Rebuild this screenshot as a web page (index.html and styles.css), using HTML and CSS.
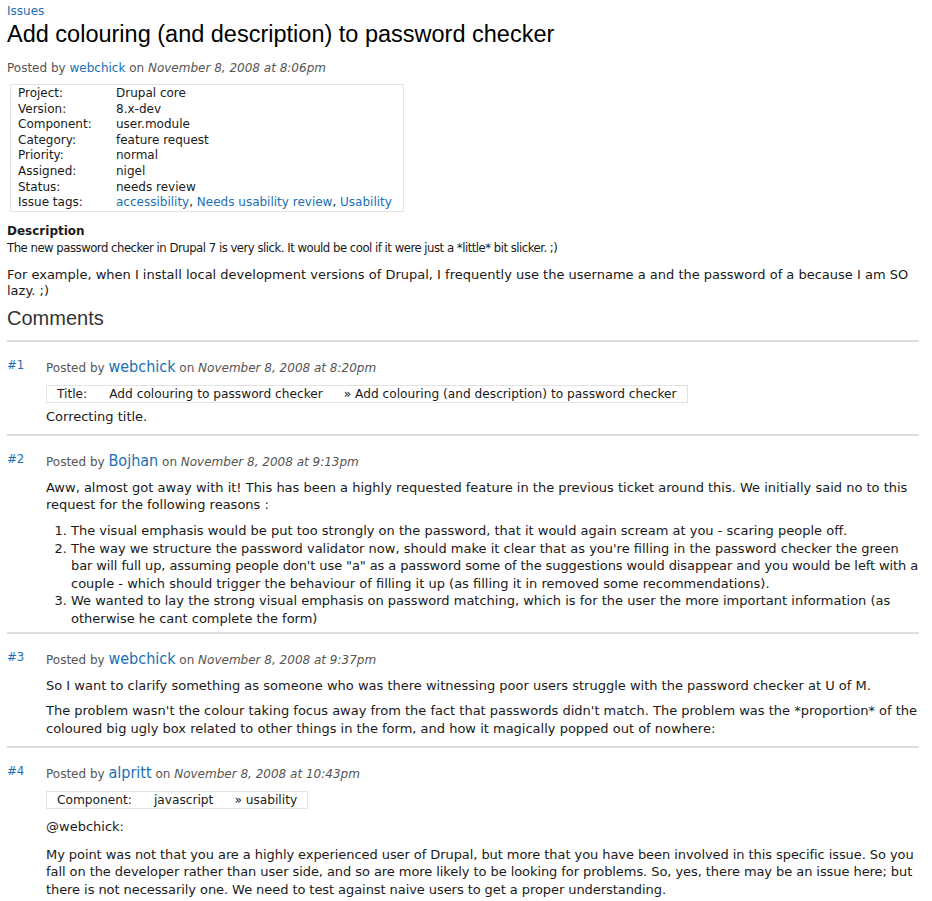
FILE: index.html
```html
<!DOCTYPE html>
<html>
<head>
<meta charset="utf-8">
<link rel="stylesheet" href="styles.css">
</head>
<body>
<div class="page">
  <div class="breadcrumb"><a href="#">Issues</a></div>
  <h1 class="title">Add colouring (and description) to password checker</h1>
  <div class="submitted">Posted by <a href="#">webchick</a> on <em>November 8, 2008 at 8:06pm</em></div>
  <table class="meta">
    <tr><td class="lbl">Project:</td><td>Drupal core</td></tr>
    <tr><td class="lbl">Version:</td><td>8.x-dev</td></tr>
    <tr><td class="lbl">Component:</td><td>user.module</td></tr>
    <tr><td class="lbl">Category:</td><td>feature request</td></tr>
    <tr><td class="lbl">Priority:</td><td>normal</td></tr>
    <tr><td class="lbl">Assigned:</td><td>nigel</td></tr>
    <tr><td class="lbl">Status:</td><td>needs review</td></tr>
    <tr><td class="lbl">Issue tags:</td><td><a href="#">accessibility</a>, <a href="#">Needs usability review</a>, <a href="#">Usability</a></td></tr>
  </table>
  <div class="description">
    <h3>Description</h3>
    <p class="first">The new password checker in Drupal 7 is very slick. It would be cool if it were just a *little* bit slicker. ;)</p>
    <p>For example, when I install local development versions of Drupal, I frequently use the username a and the password of a because I am SO lazy. ;)</p>
  </div>
  <h2 class="comments-title">Comments</h2>

  <div class="comment">
    <a class="num" href="#">#1</a>
    <div class="cbody">
      <div class="csub">Posted by <a class="author" href="#">webchick</a> on <em>November 8, 2008 at 8:20pm</em></div>
      <table class="changes"><tr><td class="clbl">Title:</td><td class="cold">Add colouring to password checker</td><td class="cnew">» Add colouring (and description) to password checker</td></tr></table>
      <p>Correcting title.</p>
    </div>
  </div>

  <div class="comment">
    <a class="num" href="#">#2</a>
    <div class="cbody">
      <div class="csub">Posted by <a class="author" href="#">Bojhan</a> on <em>November 8, 2008 at 9:13pm</em></div>
      <p class="gap">Aww, almost got away with it! This has been a highly requested feature in the previous ticket around this. We initially said no to this request for the following reasons :</p>
      <ol>
        <li>The visual emphasis would be put too strongly on the password, that it would again scream at you - scaring people off.</li>
        <li>The way we structure the password validator now, should make it clear that as you're filling in the password checker the green <span class="tight">bar will full up, assuming people don't use "a" as a password some of the suggestions would disappear and you would be left with a</span> couple - which should trigger the behaviour of filling it up (as filling it in removed some recommendations).</li>
        <li>We wanted to lay the strong visual emphasis on password matching, which is for the user the more important information (as otherwise he cant complete the form)</li>
      </ol>
    </div>
  </div>

  <div class="comment">
    <a class="num" href="#">#3</a>
    <div class="cbody">
      <div class="csub">Posted by <a class="author" href="#">webchick</a> on <em>November 8, 2008 at 9:37pm</em></div>
      <p class="gap">So I want to clarify something as someone who was there witnessing poor users struggle with the password checker at U of M.</p>
      <p>The problem wasn't the colour taking focus away from the fact that passwords didn't match. The problem was the *proportion* of the coloured big ugly box related to other things in the form, and how it magically popped out of nowhere:</p>
    </div>
  </div>

  <div class="comment">
    <a class="num" href="#">#4</a>
    <div class="cbody">
      <div class="csub">Posted by <a class="author" href="#">alpritt</a> on <em>November 8, 2008 at 10:43pm</em></div>
      <table class="changes"><tr><td class="clbl">Component:</td><td class="cold">javascript</td><td class="cnew">» usability</td></tr></table>
      <p class="after">@webchick:</p>
      <p class="snug">My point was not that you are a highly experienced user of Drupal, but more that you have been involved in this specific issue. So you fall on the developer rather than user side, and so are more likely to be looking for problems. So, yes, there may be an issue here; but there is not necessarily one. We need to test against naive users to get a proper understanding.</p>
    </div>
  </div>
</div>
</body>
</html>
```

FILE: styles.css
```css
html, body {
  margin: 0;
  padding: 0;
  background: #fff;
}
body {
  font-family: "DejaVu Sans", sans-serif;
  font-size: 12px;
  color: #1a1a1a;
  line-height: 17px;
}
a {
  color: #1a6fb5;
  text-decoration: none;
}
.page {
  padding: 3px 13px 0 7px;
}
.breadcrumb {
  font-size: 12px;
  line-height: 17px;
}
.title {
  font-family: "Liberation Sans", Arial, sans-serif;
  font-size: 23.5px;
  font-weight: normal;
  line-height: 28px;
  margin: 0 0 12px 0;
  color: #000;
}
.submitted {
  color: #555;
  margin-bottom: 7px;
}
.meta {
  margin-left: 3px;
  border: 1px solid #e3e3e3;
  border-collapse: separate;
  border-spacing: 0;
  padding: 1px 8px 0 7px;
  width: 394px;
  box-sizing: border-box;
}
.meta td {
  padding: 0;
  line-height: 15.6px;
  vertical-align: top;
  white-space: nowrap;
}
.meta td.lbl {
  width: 98px;
}
.description {
  margin-top: 11px;
}
.description h3 {
  margin: 0;
  font-size: 12px;
  font-weight: bold;
  line-height: 16px;
}
.description p {
  margin: 0 0 6px 0;
  font-size: 13px;
  line-height: 16.5px;
}
.description p.first {
  font-family: "DejaVu Sans Condensed", "DejaVu Sans", sans-serif;
  letter-spacing: -0.5px;
  line-height: 17px;
  margin-bottom: 11px;
}
.comments-title {
  font-family: "Liberation Sans", Arial, sans-serif;
  font-size: 20px;
  font-weight: normal;
  color: #333;
  margin: 0 0 10px 0;
  line-height: 24px;
}
.comment {
  border-top: 2px solid #ddd;
  display: flex;
  padding: 14px 0 3px 0;
}
.num {
  width: 39px;
  flex: none;
  font-family: "DejaVu Sans Condensed", "DejaVu Sans", sans-serif;
  font-size: 13px;
  line-height: 17px;
  margin-top: 0;
}
.cbody {
  flex: 1;
  font-size: 13px;
  line-height: 17.5px;
}
.csub {
  font-size: 12px;
  color: #555;
  line-height: 20px;
  margin-top: 1px;
  margin-bottom: 7px;
}
.author {
  font-family: "DejaVu Sans Condensed", "DejaVu Sans", sans-serif;
  font-size: 16px;
}
.changes {
  border: 1px solid #e3e3e3;
  border-collapse: separate;
  border-spacing: 0;
  margin-bottom: 5px;
  font-size: 12.2px;
}
.changes td {
  padding: 0 0 0 10px;
  line-height: 16px;
  white-space: nowrap;
}
.changes td.clbl {
  padding-right: 12px;
}
.changes td.cold {
  padding-right: 11px;
}
.changes td.cnew {
  padding-right: 10px;
}
.cbody p {
  margin: 0 0 8px 0;
}
.cbody p:last-child {
  margin-bottom: 6px;
}
.cbody p.gap {
  margin-top: 0;
  line-height: 17px;
}
.cbody p.after {
  margin-top: 9px;
  margin-bottom: 10px;
}
.cbody p.snug {
  letter-spacing: -0.07px;
}
.cbody ol {
  margin: 9px 0 2px 0;
  padding-left: 25px;
}
.tight {
  letter-spacing: -0.1px;
}
```
